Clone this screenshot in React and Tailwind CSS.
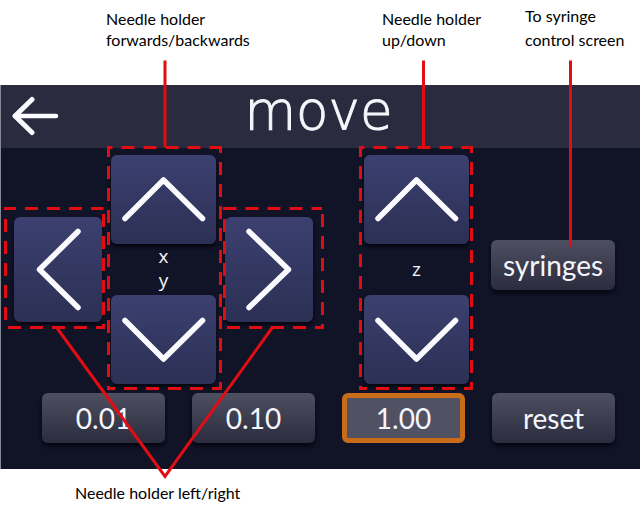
const CHEVRONS = {
  up: { box: "0 0 105 89", d: "M14 63.5 L52.5 25 L91.5 63.5" },
  down: { box: "0 0 105 89", d: "M14 25.5 L52.5 64 L91.5 25.5" },
  left: { box: "0 0 88 105", d: "M64 14.5 L25.5 52.5 L64 90.5" },
  right: { box: "0 0 88 105", d: "M24 14.5 L63.5 52.5 L24 90.5" },
};

const CALLOUT_TEXT = "font-['Lato','Liberation_Sans',sans-serif] text-base text-black";
const AXIS_TEXT = "font-['Open_Sans',sans-serif] text-[19px] font-medium text-[#f5f6fb]";

function ArrowButton({ direction, label }) {
  const tall = direction === "left" || direction === "right";
  const { box, d } = CHEVRONS[direction];
  return (
    <button
      type="button"
      aria-label={label}
      className={`${tall ? "h-[105px] w-[88px]" : "h-[89px] w-[105px]"} shrink-0 rounded-md bg-linear-to-b from-[#3b4070] to-[#2c3054] shadow-[0_3px_4px_#05060f]`}
    >
      <svg viewBox={box} className="block h-full w-full" fill="none" stroke="#fbfbff" strokeWidth="5.5" strokeLinecap="round" strokeLinejoin="round">
        <path d={d} />
      </svg>
    </button>
  );
}

function TextButton({ children, selected }) {
  return (
    <button
      type="button"
      aria-pressed={selected}
      className={`h-[50px] rounded-md text-[28px] leading-none text-[#f5f6fb] ${
        selected
          ? "border-[5px] border-[#c96c1a] bg-[#505264]"
          : "bg-linear-to-b from-[#4e5061] to-[#2b2c3e] shadow-[0_3px_4px_#05060f]"
      }`}
    >
      {children}
    </button>
  );
}

function Callouts() {
  return (
    <svg
      aria-hidden="true"
      viewBox="0 0 640 509"
      className="pointer-events-none absolute top-0 left-0 h-[509px] w-[640px]"
      fill="none"
      stroke="#e20d12"
      strokeWidth="3"
    >
      <path d="M165 60.5 V147 M423.5 60.5 V147 M570.5 60.5 V247" />
      <path d="M57 328 L165 476.5 L272 328" />
      <g strokeDasharray="13 9">
        <path d="M108.5 147.5 H220.5" strokeDashoffset="9" />
        <path d="M220.5 146 V388.5" strokeDashoffset="6" />
        <path d="M108.5 146 V388.5" strokeDashoffset="2" />
        <path d="M107 388.5 H222" strokeDashoffset="5" />
        <path d="M360.5 147.5 H471.5" strokeDashoffset="9" />
        <path d="M471.5 146 V388.5" strokeDashoffset="6" />
        <path d="M360.5 146 V388.5" strokeDashoffset="2" />
        <path d="M359 388.5 H473" strokeDashoffset="5" />
        <path d="M4 208.5 H103.5" strokeDashoffset="1" />
        <path d="M103.5 214 V328" />
        <path d="M5.5 207 V327.5" strokeDashoffset="10" />
        <path d="M8 327.5 H105" />
        <path d="M224.5 208.5 H322" strokeDashoffset="1" />
        <path d="M322.5 214 V328" />
        <path d="M224.5 207 V327.5" strokeDashoffset="10" />
        <path d="M227 327.5 H324" />
      </g>
    </svg>
  );
}

export default function App() {
  return (
    <main className="min-h-screen bg-white">
      <figure className="relative mx-auto w-full max-w-[640px]">
        <div className={`grid h-[85px] grid-cols-[276px_143px_1fr] pt-2 pl-[106px] ${CALLOUT_TEXT}`}>
          <p className="leading-[21px]">Needle holder<br />forwards/backwards</p>
          <p className="leading-[21px]">Needle holder<br />up/down</p>
          <p className="-mt-1 leading-6">To syringe<br />control screen</p>
        </div>

        <section className="border-l border-[#858a96] bg-[#111327] pb-[26px] font-['Lato','Liberation_Sans',sans-serif]">
          <header className="grid h-[63px] grid-cols-[64px_1fr_68px] items-center bg-[#2a2b3f]">
            <button type="button" aria-label="Back" className="pl-[10px]">
              <svg width="50" height="42" viewBox="0 0 50 42" fill="none" stroke="#fbfbff" strokeWidth="5" strokeLinecap="round" strokeLinejoin="round">
                <path d="M21 3.5 L4 20 L21 36.5" />
                <path d="M4 20 H45" strokeWidth="4.5" />
              </svg>
            </button>
            <h1 className="pb-3 text-center font-['DejaVu_Sans','DejaVu_Sans_Light',sans-serif] text-[53px] leading-[50px] font-extralight text-[#f5f6fb] [-webkit-text-stroke:1px_#f5f6fb]">move</h1>
          </header>

          <div className="flex pt-[7px] pl-[13px]">
            <div className="flex items-center gap-[9px]">
              <ArrowButton direction="left" label="Needle holder left" />
              <div className="flex flex-col">
                <ArrowButton direction="up" label="Needle holder forwards" />
                <div className={`flex h-[51px] flex-col items-center justify-center pb-1 ${AXIS_TEXT}`}>
                  <span className="leading-6">x</span>
                  <span className="leading-6">y</span>
                </div>
                <ArrowButton direction="down" label="Needle holder backwards" />
              </div>
              <ArrowButton direction="right" label="Needle holder right" />
            </div>
            <div className="ml-[51px] flex flex-col">
              <ArrowButton direction="up" label="Needle holder up" />
              <div className={`flex h-[51px] items-center justify-center ${AXIS_TEXT}`}>
                <span>z</span>
              </div>
              <ArrowButton direction="down" label="Needle holder down" />
            </div>
            <div className="flex flex-1 flex-col pt-[85px] pr-[25px] pl-[22px]">
              <TextButton>syringes</TextButton>
            </div>
          </div>

          <div className="mt-[9px] grid grid-cols-4 gap-[27px] pr-[25px] pl-[41px]">
            <TextButton>0.01</TextButton>
            <TextButton>0.10</TextButton>
            <TextButton selected>1.00</TextButton>
            <TextButton>reset</TextButton>
          </div>
        </section>

        <figcaption className={`pt-3 pl-[75px] ${CALLOUT_TEXT}`}>
          Needle holder left/right
        </figcaption>
        <Callouts />
      </figure>
    </main>
  );
}
